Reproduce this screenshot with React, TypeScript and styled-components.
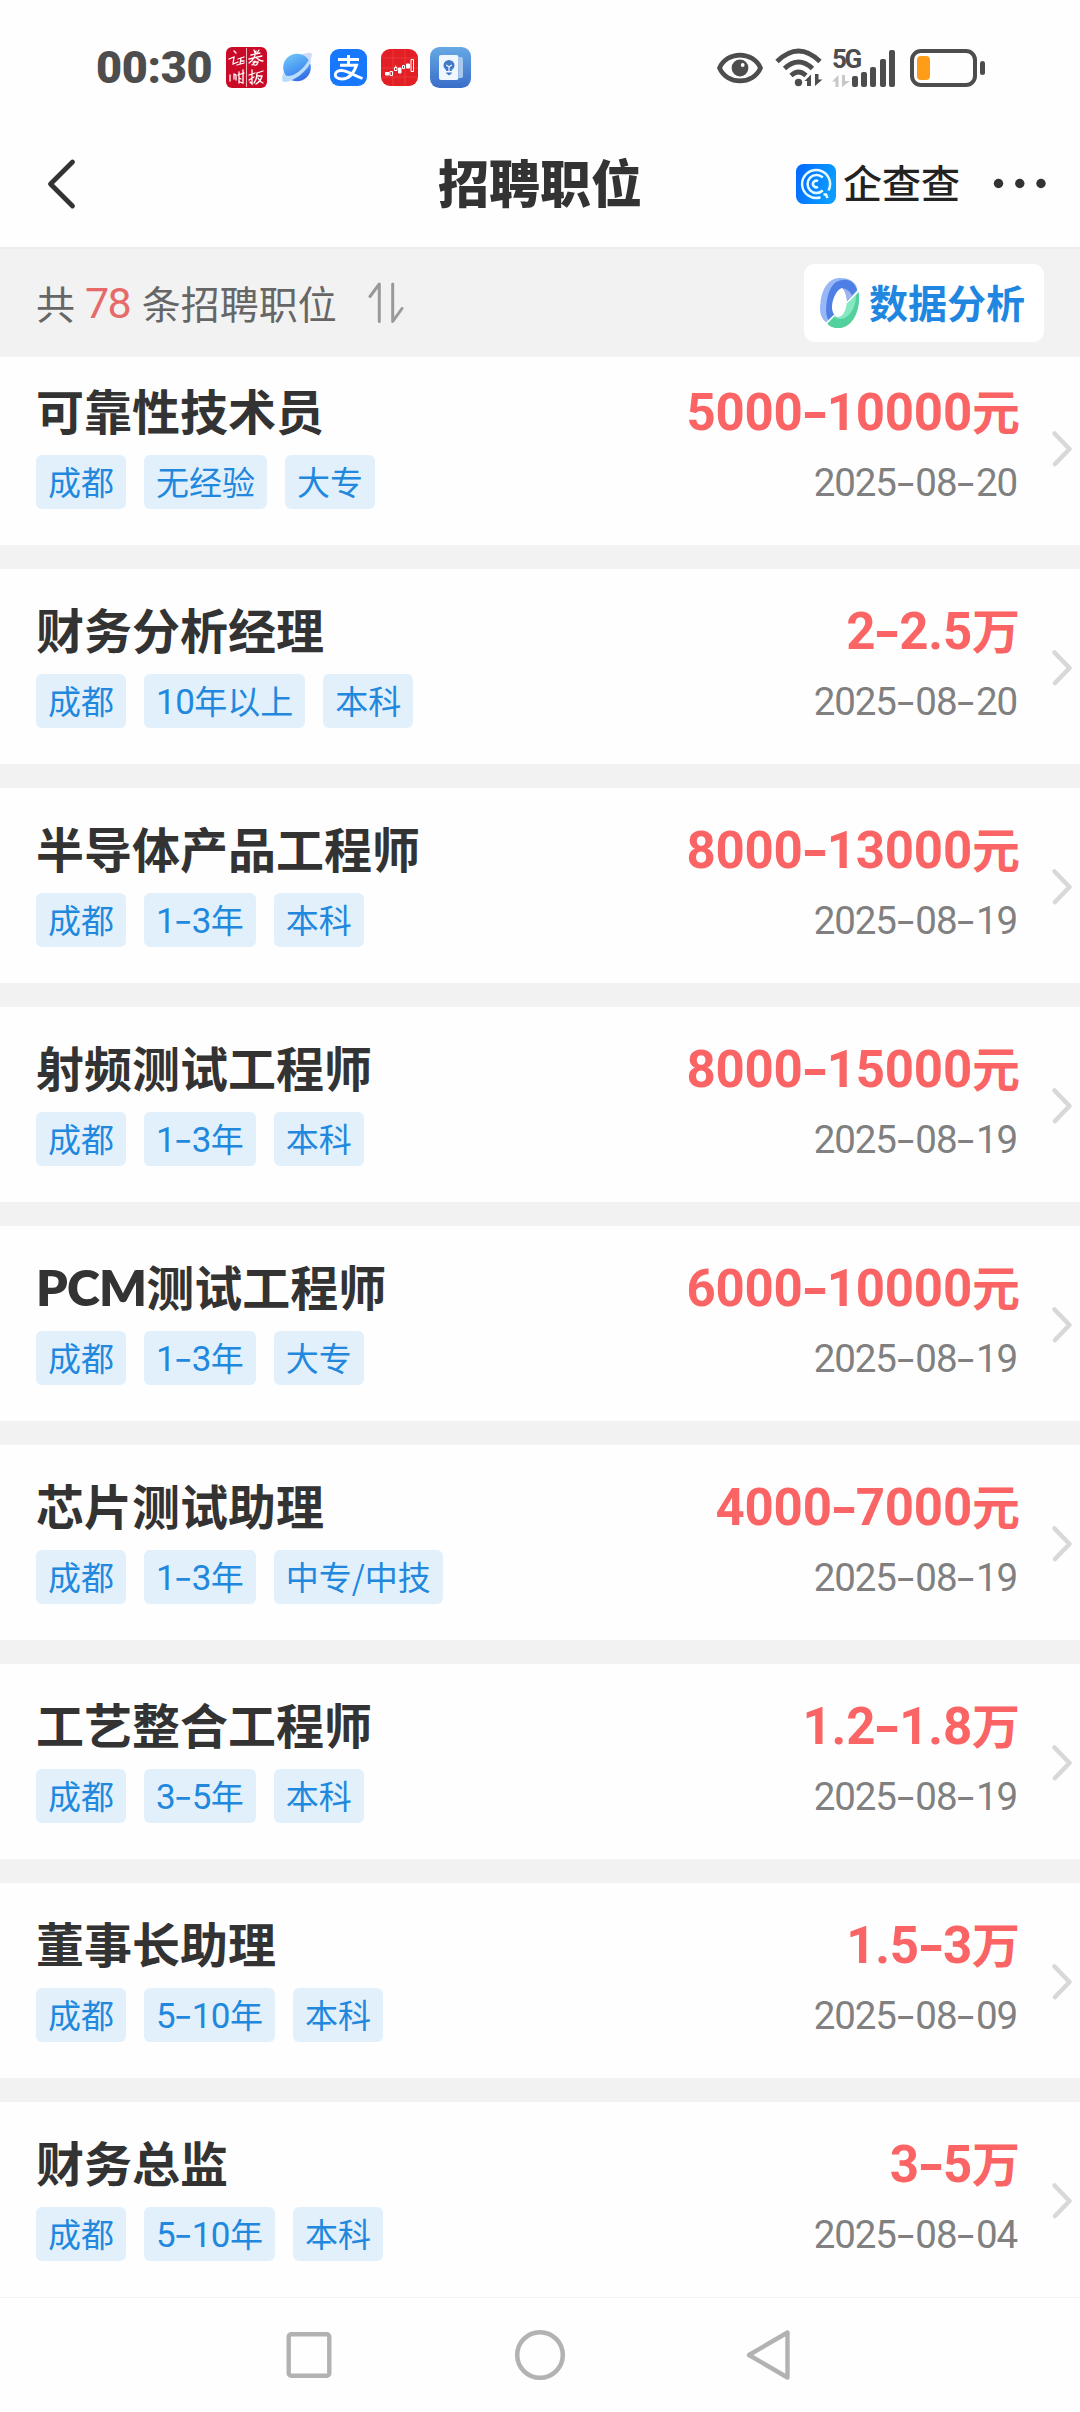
import React from "react";
import styled, { createGlobalStyle } from "styled-components";

const GlobalStyle = createGlobalStyle`
  * { box-sizing: border-box; }
  body {
    margin: 0;
    background: #ffffff;
    font-family: "Noto Sans CJK SC", sans-serif;
  }
`;

const Screen = styled.div`
  display: flex;
  flex-direction: column;
  width: 1080px;
  height: 2412px;
  overflow: hidden;
  background: #fefefe;
`;

const StatusBar = styled.header`
  display: flex;
  align-items: center;
  justify-content: space-between;
  flex: none;
  height: 120px;
  padding: 15px 95px 0 96px;
`;

const StatusGroup = styled.div`
  display: flex;
  align-items: center;
`;

const Clock = styled.span`
  width: 130px;
  font: 900 45px/50px Roboto, sans-serif;
  letter-spacing: -0.3px;
  color: #4d4d4d;
`;

const Icon = styled.svg<{ $ml?: number }>`
  display: block;
  flex: none;
  margin-left: ${(p) => p.$ml ?? 0}px;
`;

const TitleBar = styled.nav`
  display: grid;
  grid-template-columns: 1fr auto 1fr;
  align-items: center;
  flex: none;
  height: 129px;
  padding: 0 31px 0 46px;
  border-bottom: 2px solid #ededed;
`;

const PageTitle = styled.h1`
  margin: 0 0 5px -15px;
  font-size: 51px;
  line-height: 60px;
  font-weight: 900;
  color: #333333;
`;

const TitleActions = styled.div`
  display: flex;
  align-items: center;
  justify-content: flex-end;
`;

const Brand = styled.span`
  margin: 0 31px 5px 7px;
  font-size: 39px;
  line-height: 48px;
  font-weight: 500;
  color: #222222;
`;

const FilterBar = styled.section`
  display: flex;
  align-items: center;
  justify-content: space-between;
  flex: none;
  height: 108px;
  padding: 0 36px;
  background: #f2f2f2;
`;

const Summary = styled.div`
  display: flex;
  align-items: center;
  font-size: 39px;
  line-height: 56px;
  color: #666666;
  white-space: pre;
`;

const SummaryText = styled.span`
  padding-bottom: 3px;
`;

const Count = styled.span`
  margin: 0 12px 0 10px;
  font: 400 43px/56px Roboto, sans-serif;
  letter-spacing: -1.8px;
  color: #e66a6a;
`;

const AnalysisButton = styled.button`
  display: flex;
  align-items: center;
  width: 240px;
  height: 78px;
  padding: 0 0 0 15px;
  border: 0;
  border-radius: 11px;
  background: #ffffff;
  font: 700 39px/56px "Noto Sans CJK SC", sans-serif;
  color: #1f87e0;
  gap: 9px;
  white-space: nowrap;
`;

const ButtonLabel = styled.span`
  padding-bottom: 4px;
`;

const List = styled.main`
  display: flex;
  flex-direction: column;
  justify-content: flex-end;
  flex: none;
  height: 1940px;
  gap: 24px;
  overflow: hidden;
  background: #f2f2f2;
`;

const Card = styled.article`
  display: flex;
  flex: none;
  height: 195px;
  padding: 26px 6px 0 36px;
  background: #fefefe;
`;

const Details = styled.div`
  flex: 1;
`;

const JobTitle = styled.h2`
  margin: 0;
  height: 79px;
  font-size: 48px;
  line-height: 66px;
  font-weight: 700;
  color: #333333;
`;

const Tags = styled.div`
  display: flex;
  gap: 18px;
`;

const Tag = styled.span`
  height: 54px;
  padding: 0 12px;
  border-radius: 6px;
  background: #e2f0fc;
  font-size: 33px;
  line-height: 53px;
  color: #2188dd;
  white-space: nowrap;
`;

const Offer = styled.div`
  display: flex;
  flex-direction: column;
  align-items: flex-end;
  width: 360px;
  margin-right: 30px;
`;

const Salary = styled.strong`
  height: 77px;
  font-size: 48px;
  line-height: 66px;
  font-weight: 700;
  color: #fa6464;
  white-space: nowrap;
`;

const PostedOn = styled.time`
  padding-right: 3px;
  line-height: 54px;
  font-size: 36px;
  color: #808080;
  white-space: nowrap;
`;

const Digits = styled.span<{ $size: number; $track: number }>`
  font-family: Roboto, sans-serif;
  font-size: ${(p) => p.$size}px;
  line-height: 1;
  letter-spacing: ${(p) => p.$track}px;
`;

const Latin = styled.span`
  font-family: Lato, sans-serif;
  font-size: 50px;
  line-height: 1;
  font-weight: 800;
  letter-spacing: -0.8px;
`;

const Dash = styled.span<{ $size: number; $width: number }>`
  display: inline-block;
  width: ${(p) => p.$width}px;
  font-family: Inter, sans-serif;
  font-size: ${(p) => p.$size}px;
  line-height: 1;
  text-align: center;
  transform: scaleX(1.2);
`;

const ChevronSlot = styled.div`
  padding-top: 53px;
`;

const NavBar = styled.footer`
  display: flex;
  align-items: center;
  justify-content: center;
  flex: 1;
  gap: 178px;
  border-top: 1px solid #f2f2f2;
`;

type Metrics = { size: number; track: number; dash: number };

const salaryMetrics: Metrics = { size: 51, track: -0.2, dash: 24 };
const dateMetrics: Metrics = { size: 38.5, track: -1.1, dash: 19.5 };
const tagMetrics: Metrics = { size: 35, track: -0.5, dash: 16.5 };

/* Splits a label into numerals, dashes, Latin capitals and Chinese runs. */
function Mixed({ text, metrics }: { text: string; metrics: Metrics }) {
  const runs = text.match(/[0-9.]+|-|[A-Z]+|[^0-9.A-Z-]+/g) ?? [];
  return (
    <>
      {runs.map((run, i) => {
        if (run === "-")
          return (
            <Dash key={i} $size={metrics.size} $width={metrics.dash}>
              {run}
            </Dash>
          );
        if (/^[0-9.]/.test(run))
          return (
            <Digits key={i} $size={metrics.size} $track={metrics.track}>
              {run}
            </Digits>
          );
        if (/^[A-Z]/.test(run)) return <Latin key={i}>{run}</Latin>;
        return <React.Fragment key={i}>{run}</React.Fragment>;
      })}
    </>
  );
}

type Job = { title: string; pay: string; date: string; tags: string[] };

const jobs: Job[] = [
  { title: "可靠性技术员", pay: "5000-10000元", date: "2025-08-20", tags: ["成都", "无经验", "大专"] },
  { title: "财务分析经理", pay: "2-2.5万", date: "2025-08-20", tags: ["成都", "10年以上", "本科"] },
  { title: "半导体产品工程师", pay: "8000-13000元", date: "2025-08-19", tags: ["成都", "1-3年", "本科"] },
  { title: "射频测试工程师", pay: "8000-15000元", date: "2025-08-19", tags: ["成都", "1-3年", "本科"] },
  { title: "PCM测试工程师", pay: "6000-10000元", date: "2025-08-19", tags: ["成都", "1-3年", "大专"] },
  { title: "芯片测试助理", pay: "4000-7000元", date: "2025-08-19", tags: ["成都", "1-3年", "中专/中技"] },
  { title: "工艺整合工程师", pay: "1.2-1.8万", date: "2025-08-19", tags: ["成都", "3-5年", "本科"] },
  { title: "董事长助理", pay: "1.5-3万", date: "2025-08-09", tags: ["成都", "5-10年", "本科"] },
  { title: "财务总监", pay: "3-5万", date: "2025-08-04", tags: ["成都", "5-10年", "本科"] },
];

function JobCard({ job }: { job: Job }) {
  return (
    <Card>
      <Details>
        <JobTitle>
          <Mixed text={job.title} metrics={salaryMetrics} />
        </JobTitle>
        <Tags>
          {job.tags.map((t) => (
            <Tag key={t}>
              <Mixed text={t} metrics={tagMetrics} />
            </Tag>
          ))}
        </Tags>
      </Details>
      <Offer>
        <Salary>
          <Mixed text={job.pay} metrics={salaryMetrics} />
        </Salary>
        <PostedOn>
          <Mixed text={job.date} metrics={dateMetrics} />
        </PostedOn>
      </Offer>
      <ChevronSlot>
        <Icon width="24" height="40" viewBox="0 0 24 40" fill="none">
          <path d="M4.500 4.500 19.500 20 5 35" stroke="#d8d8d8" strokeWidth="4.600" strokeLinecap="round" strokeLinejoin="round" />
        </Icon>
      </ChevronSlot>
    </Card>
  );
}

function SealIcon() {
  return (
    <Icon width="41" height="41" viewBox="0 0 41 41">
      <rect width="41" height="41" rx="6" fill="#cb0a28" />
      <path d="M20.500 1v39" stroke="#f3c5cc" strokeWidth="0.900" />
      <g stroke="#fff" strokeWidth="1.300" fill="none" strokeLinecap="round">
        <path d="M8 4l2 2M3 12l5-2-1 7 5-2M12 12l6-2M15 11l-1 6M11 18l7-2M15 14h3" />
        <path d="M28 3l1 3M33 3l-2 3M25 8l9-2M23 12l13-3M30 4q-1 8-7 12M30 10q3 4 7 4M27 15h5q-1 4-4 3M29 14q-1 3-3 4" />
        <path d="M4 28v6M8 27v5M8 27l2 1v5M13 25v11M12 28l6-2M17 23v13l-3-1M13 31l2 1" />
        <path d="M23 28l6-2M26 23v14l-2-2M23 33l5-3M31 26l6-2M31 26q0 6-3 10M32 29h4q-1 5-6 8M32 31q2 4 5 5" />
      </g>
    </Icon>
  );
}

function PlanetIcon() {
  return (
    <Icon $ml={15} width="31" height="31" viewBox="0 0 31 31">
      <defs>
        <linearGradient id="planet" x1="0.200" y1="0" x2="0.700" y2="1">
          <stop offset="0" stopColor="#6fc6f8" />
          <stop offset="0.550" stopColor="#4a98f3" />
          <stop offset="1" stopColor="#3467e4" />
        </linearGradient>
      </defs>
      <path d="M19 2.500Q28-0.500 29.500 1.500T26.500 12Z" fill="#cfdaf8" />
      <circle cx="15" cy="15.500" r="13.800" fill="url(#planet)" />
      <path d="M1.500 20Q-1 28 1 29.800C9 31.500 27 19 29 8.500Q28.500 7.500 27 7C23 16 11 26 4 23.500 2.500 23 1.800 21.500 1.500 20Z" fill="#b9dcfb" />
    </Icon>
  );
}

const Alipay = styled.span`
  display: flex;
  align-items: center;
  justify-content: center;
  width: 37px;
  height: 37px;
  margin: 0 14px 0 17px;
  border-radius: 9px;
  background: #1778fe;
`;

function AlipayIcon() {
  return (
    <Alipay>
      <Icon width="31" height="30" viewBox="0 0 31 30" fill="none" stroke="#fff" strokeWidth="2.900">
        <path d="M5 6.500H26M15.500 2V12M7 12.200H23.500C21.500 18 17 26 9 26 4.500 26 2 24 2.300 21.500 2.600 18.500 6 17.300 9 17.500 15 18 21 22.500 29.500 25.500" />
      </Icon>
    </Alipay>
  );
}

function StockIcon() {
  return (
    <Icon width="37" height="37" viewBox="0 0 37 37">
      <rect width="37" height="37" rx="9" fill="#e21f24" />
      <path d="M0 9H37M0 19H37M0 28H37M12 0V37M24 0V37" stroke="#ee4a4a" strokeWidth="0.600" />
      <g stroke="#fff" strokeWidth="1" fill="none">
        <path d="M4.500 23.500h3.500v2.500H4.500z" fill="#fff" />
        <path d="M9 22.500h2.500v4H9zM13.500 18.500h2.500v3h-2.500zM14.700 16.500v2" />
        <path d="M17.500 19h2.500v5h-2.500z" fill="#fff" />
        <path d="M21.500 16.500h2v3h-2z" />
        <path d="M25.500 15h3v4h-3z" fill="#fff" />
        <path d="M30 10.500H32.500V22.500H30z" />
      </g>
    </Icon>
  );
}

function IdeaIcon() {
  return (
    <Icon $ml={12} width="41" height="41" viewBox="0 0 41 41">
      <defs>
        <linearGradient id="idea" x1="0" y1="0" x2="0" y2="1">
          <stop offset="0" stopColor="#66a9e4" />
          <stop offset="1" stopColor="#3a6dc9" />
        </linearGradient>
      </defs>
      <rect width="41" height="41" rx="9.500" fill="url(#idea)" />
      <path d="M29 10H31.500Q33 10 33 12V29Q33 31 31.500 31H29Z" fill="#a9c8ee" />
      <rect x="9" y="8" width="19.500" height="25" rx="2" fill="#f0f6fe" />
      <path d="M16.300 24C16.300 22.300 13.500 21.500 13.500 18.500A5.500 5.500 0 0 1 24.500 18.500C24.500 21.500 21.700 22.300 21.700 24Z" fill="#4379c8" />
      <path d="M16.500 26H21.500L19 28Z" fill="#4379c8" stroke="#4379c8" />
      <path d="M16.300 18l2.700 2 2.700-2M19 20v4" stroke="#f0f6fe" strokeWidth="1.200" fill="none" />
    </Icon>
  );
}

function EyeIcon() {
  return (
    <Icon width="46" height="32" viewBox="0 0 46 32">
      <path d="M2.500 16C10-1.200 36-1.200 43.500 16 36 33.200 10 33.200 2.500 16Z" fill="none" stroke="#4d4d4d" strokeWidth="4.600" />
      <circle cx="23" cy="16" r="8.400" fill="#4d4d4d" />
      <circle cx="25.700" cy="13" r="1.900" fill="#fff" />
    </Icon>
  );
}

function WifiIcon() {
  return (
    <Icon $ml={12} width="48" height="40" viewBox="0 0 48 40">
      <g fill="none" stroke="#4d4d4d" strokeWidth="4.800">
        <path d="M2 13.500Q23.500-7.500 45 13.500" />
        <path d="M9.500 20.500Q23.500 7.500 37.500 20.500" />
        <path d="M16 27.500Q23.500 20.500 31 27.500" />
      </g>
      <circle cx="23.500" cy="34.500" r="3.700" fill="#4d4d4d" />
      <path d="M29.500 33 36 26.500V38H32V33ZM40 26V38L47.500 31.500H43.500V26Z" fill="#4d4d4d" />
    </Icon>
  );
}

const Signal = styled.div`
  display: flex;
  align-items: flex-end;
  height: 38px;
  margin-left: 9px;
`;

const Network = styled.div`
  display: flex;
  flex-direction: column;
  justify-content: space-between;
  width: 20px;
  height: 38px;
`;

const NetworkLabel = styled.span`
  width: 28px;
  font: 700 26px/20px Roboto, sans-serif;
  letter-spacing: -2.500px;
  color: #4d4d4d;
`;

const SignalBar = styled.i<{ $h: number }>`
  width: 6px;
  height: ${(p) => p.$h}px;
  margin-right: 3.200px;
  border-radius: 2px;
  background: #4d4d4d;
`;

const Battery = styled.div`
  width: 67px;
  height: 38px;
  margin-left: 12px;
  padding: 4px;
  border: 4px solid #4d4d4d;
  border-radius: 11px;
`;

const Charge = styled.div`
  width: 13px;
  height: 24px;
  margin-top: -1px;
  margin-left: -1px;
  border-radius: 4px;
  background: #ff9c1a;
`;

const Terminal = styled.div`
  width: 5px;
  height: 14px;
  margin-left: 3px;
  border-radius: 3px;
  background: #4d4d4d;
`;

function QccLogo() {
  return (
    <Icon width="40" height="40" viewBox="0 0 40 40" fill="none">
      <defs>
        <linearGradient id="qcc" x1="0" y1="0" x2="1" y2="0.300">
          <stop offset="0" stopColor="#0567ff" />
          <stop offset="1" stopColor="#0a9cff" />
        </linearGradient>
      </defs>
      <rect width="40" height="40" rx="7.500" fill="url(#qcc)" />
      <g stroke="#e6fbff" strokeWidth="2.500">
        <path d="M32.500 26.500A14 14 0 1 0 24.500 33.300M27.500 30.500H30L31.500 34" />
        <path d="M26.800 13.500A9 9 0 1 0 26.800 26.500" />
        <path d="M22 17.200A3.300 3.300 0 1 0 22 22.800" />
      </g>
    </Icon>
  );
}

function RingIcon() {
  return (
    <Icon width="41" height="50" viewBox="0 0 41 50">
      <path d="M21 0C33 0 38 6 38.500 13L8 45C2 41 0 34 1.500 25 3 10 10 0 21 0Z" fill="#97b7f7" />
      <path d="M23 2C32 0 37 7 38 12L10 43C6 37 7 29 8 22 10 10 15 3 23 2Z" fill="#4e7fe6" />
      <path d="M39.500 14C42 33 33 50 20 50 14 50 10 48 8.500 45.500L16 38 28 25Z" fill="#52d19d" />
      <path d="M38.500 15C39 29 30 42 22 42 18 42 16 41 14.500 39.500L28 25Z" fill="#86e8c1" />
      <path d="M39.500 14C42 33 33 50 20 50 14 50 10 48 8.500 45.500L15 39C27 46 37 32 37 17Z" fill="#52d19d" />
      <path d="M23 10C17 12 13 22 13 29 13 35 16 39 19 39 25 39 28 29 28 22 27 16 26 12 23 10Z" fill="#fff" />
      <path d="M23 10C28 11 32 14 33 18L28 23C28 18 26 13 23 10Z" fill="#9fb4ee" />
      <path d="M40 12.500 28 24.500M15 37.500 7 45.500" stroke="#fff" strokeWidth="1.500" />
    </Icon>
  );
}

export default function App() {
  return (
    <Screen>
      <GlobalStyle />
      <StatusBar>
        <StatusGroup>
          <Clock>00:30</Clock>
          <SealIcon />
          <PlanetIcon />
          <AlipayIcon />
          <StockIcon />
          <IdeaIcon />
        </StatusGroup>
        <StatusGroup>
          <EyeIcon />
          <WifiIcon />
          <Signal>
            <Network>
              <NetworkLabel>5G</NetworkLabel>
              <Icon width="18" height="12" viewBox="0 0 18 12">
                <path d="M0 6.500 6.500 0V12H3.500V6.500ZM10 0V12L18 6H13V0Z" fill="#c8c8c8" />
              </Icon>
            </Network>
            {[11, 15, 20, 28, 37].map((h) => (
              <SignalBar key={h} $h={h} />
            ))}
          </Signal>
          <Battery>
            <Charge />
          </Battery>
          <Terminal />
        </StatusGroup>
      </StatusBar>

      <TitleBar>
        <Icon width="30" height="52" viewBox="0 0 30 52" fill="none">
          <path d="M26.500 4 4.500 26 26.500 48" stroke="#333" strokeWidth="4.800" strokeLinecap="round" strokeLinejoin="round" />
        </Icon>
        <PageTitle>招聘职位</PageTitle>
        <TitleActions>
          <QccLogo />
          <Brand>企查查</Brand>
          <Icon width="58" height="12" viewBox="0 0 58 12" fill="#333">
            <circle cx="7.500" cy="5.500" r="4.700" />
            <circle cx="28.800" cy="5.500" r="4.700" />
            <circle cx="50" cy="5.500" r="4.700" />
          </Icon>
        </TitleActions>
      </TitleBar>

      <FilterBar>
        <Summary>
          <SummaryText>共</SummaryText>
          <Count>78</Count>
          <SummaryText>条招聘职位</SummaryText>
          <Icon $ml={31} width="36" height="42" viewBox="0 0 36 42" fill="none" stroke="#999" strokeWidth="3" strokeLinecap="round" strokeLinejoin="round">
            <path d="M2 14.500 11.300 2V39.500M24.700 2V39.500L34 26.500" />
          </Icon>
        </Summary>
        <AnalysisButton>
          <RingIcon />
          <ButtonLabel>数据分析</ButtonLabel>
        </AnalysisButton>
      </FilterBar>

      <List>
        {jobs.map((job) => (
          <JobCard key={job.title} job={job} />
        ))}
      </List>

      <NavBar>
        <Icon width="52" height="52" viewBox="0 0 52 52" fill="none" stroke="#b2b2b2" strokeWidth="4.400">
          <rect x="4.700" y="5.200" width="40.600" height="41.500" rx="2.500" />
        </Icon>
        <Icon width="52" height="52" viewBox="0 0 52 52" fill="none" stroke="#b2b2b2" strokeWidth="4.500">
          <circle cx="26" cy="26" r="22.800" />
        </Icon>
        <Icon width="52" height="52" viewBox="0 0 52 52" fill="none" stroke="#b2b2b2" strokeWidth="4.400" strokeLinejoin="round">
          <path d="M43.500 3.500V48.500L5 26Z" />
        </Icon>
      </NavBar>
    </Screen>
  );
}
